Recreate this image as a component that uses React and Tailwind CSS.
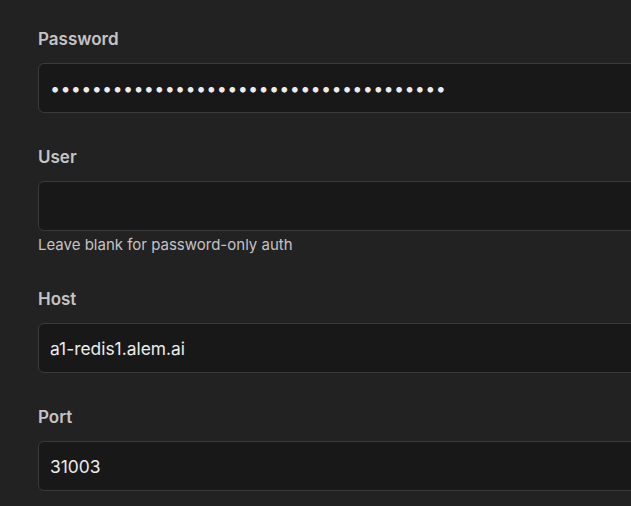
const Field = ({ label, value, type = "text", hint }) => (
  <div className="flex flex-col">
    <label className="text-[17px] leading-[24px] font-semibold text-[#c4c4c4]">{label}</label>
    <input
      type={type}
      defaultValue={value}
      readOnly
      className={`mt-3 h-[50px] w-[640px] rounded-md border border-[#3a3a3a] bg-[#181818] px-[11px] text-[#ececec] outline-none ${
        type === "password" ? "text-[18px] tracking-[0.3px]" : "text-[17.4px]"
      }`}
    />
    {hint && <span className="mt-[4px] text-[15px] leading-[20px] text-[#c4c4c4]">{hint}</span>}
  </div>
);

export default function App() {
  return (
    <div className="h-[506px] w-[631px] overflow-hidden bg-[#222222] pl-[38px] pt-[27px] font-['Inter',sans-serif]">
      <div className="flex flex-col gap-8">
        <Field label="Password" type="password" value={"x".repeat(38)} />
        <Field label="User" value="" hint="Leave blank for password-only auth" />
        <Field label="Host" value="a1-redis1.alem.ai" />
        <Field label="Port" value="31003" />
      </div>
    </div>
  );
}
